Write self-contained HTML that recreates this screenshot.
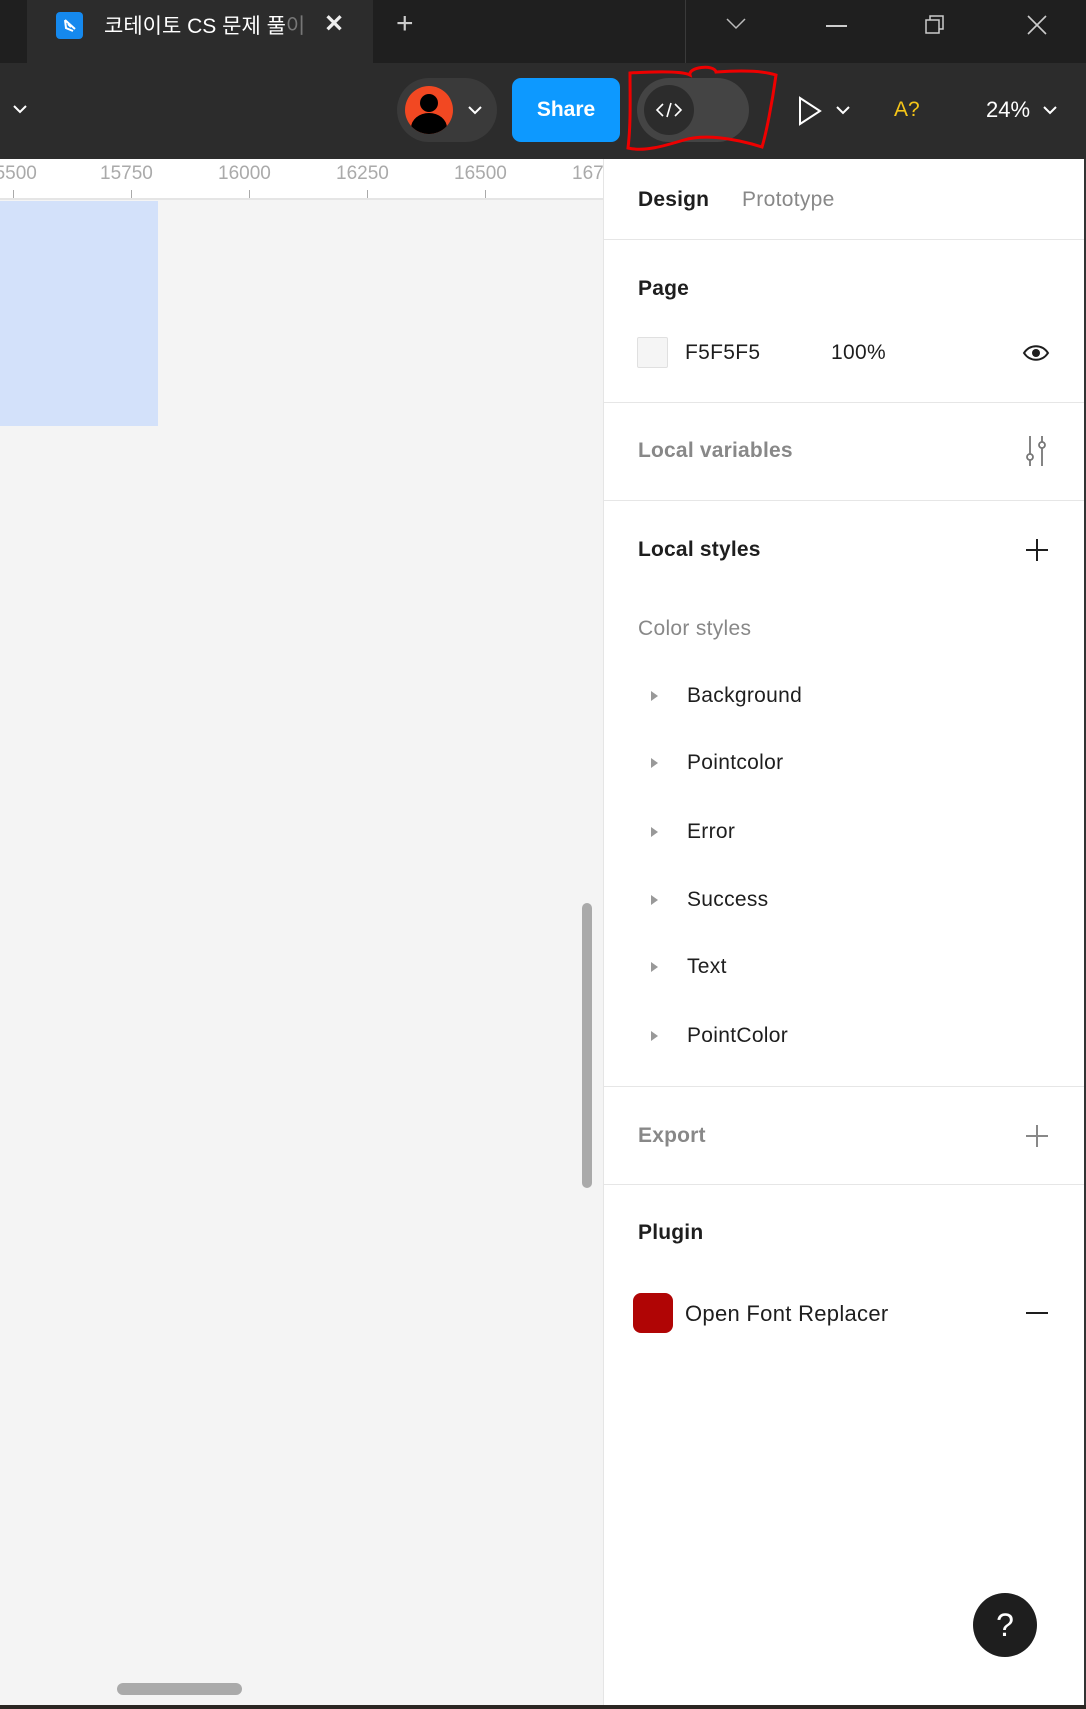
<!DOCTYPE html>
<html><head><meta charset="utf-8"><style>
*{margin:0;padding:0;box-sizing:border-box}
body{width:1086px;height:1709px;position:relative;overflow:hidden;background:#f4f4f4;font-family:"Liberation Sans","Noto Sans CJK KR",sans-serif}
.a{position:absolute}
.t{position:absolute;white-space:nowrap;transform:translateY(-50%)}
.hr{position:absolute;left:604px;width:480px;height:1px;background:#e6e6e6}
.item{font-size:21px;color:#1e1e1e;letter-spacing:0.3px}
.h{font-size:21px;font-weight:bold;letter-spacing:0.2px}
.tri{position:absolute;width:0;height:0;border-left:7px solid #999;border-top:5px solid transparent;border-bottom:5px solid transparent}
</style></head><body>
<!-- tab bar -->
<div class="a" style="left:0;top:0;width:1086px;height:63px;background:#1f1f1f"></div>
<div class="a" style="left:27px;top:0;width:346px;height:63px;background:#2c2c2c"></div>
<div class="a" style="left:56px;top:12px;width:27px;height:27px;background:#1589ee;border-radius:4px"></div>
<svg class="a" style="left:56px;top:12px" width="27" height="27"><path d="M9 8 L19 17 M9 8 L10 16 L17 19 M12 12 l3 3" stroke="#fff" stroke-width="2" fill="none"/></svg>
<div class="t" style="left:104px;top:25px;font-size:21px;color:#fff">코테이토 CS 문제 풀<span style="color:#777">이</span></div>
<div class="t" style="left:324px;top:24px;font-size:24px;color:#eee;font-weight:bold">✕</div>
<div class="t" style="left:396px;top:24px;font-size:30px;color:#ccc">+</div>
<div class="a" style="left:685px;top:0;width:1px;height:63px;background:#3a3a3a"></div>
<svg class="a" style="left:725px;top:15px" width="22" height="16"><path d="M2 4 L11 13 L20 4" stroke="#bbb" stroke-width="1.5" fill="none"/></svg>
<div class="a" style="left:826px;top:25px;width:21px;height:2px;background:#ccc"></div>
<svg class="a" style="left:924px;top:14px" width="22" height="22"><rect x="2" y="6" width="13" height="13" stroke="#ccc" stroke-width="1.5" fill="none"/><path d="M6 6 V2 H19 V15 H15" stroke="#ccc" stroke-width="1.5" fill="none"/></svg>
<svg class="a" style="left:1026px;top:14px" width="22" height="22"><path d="M2 2 L20 20 M20 2 L2 20" stroke="#ccc" stroke-width="1.6"/></svg>
<!-- toolbar -->
<div class="a" style="left:0;top:63px;width:1086px;height:96px;background:#2c2c2c"></div>
<svg class="a" style="left:12px;top:103px" width="16" height="12"><path d="M2 3 L8 9 L14 3" stroke="#fff" stroke-width="2" fill="none"/></svg>
<div class="a" style="left:397px;top:78px;width:100px;height:64px;border-radius:32px;background:#3a3a3a"></div>
<div class="a" style="left:405px;top:86px;width:48px;height:48px;border-radius:50%;background:#f24822;overflow:hidden">
<div class="a" style="left:15px;top:8px;width:18px;height:18px;border-radius:50%;background:#000"></div>
<div class="a" style="left:6px;top:27px;width:36px;height:30px;border-radius:50%;background:#000"></div></div>
<svg class="a" style="left:467px;top:104px" width="16" height="12"><path d="M2 3 L8 9 L14 3" stroke="#fff" stroke-width="2" fill="none"/></svg>
<div class="a" style="left:512px;top:78px;width:108px;height:64px;border-radius:9px;background:#0d99ff;color:#fff;font-size:21px;font-weight:bold;text-align:center;line-height:64px">Share</div>
<div class="a" style="left:637px;top:78px;width:112px;height:64px;border-radius:32px;background:#444"></div>
<div class="a" style="left:644px;top:85px;width:50px;height:50px;border-radius:50%;background:#2c2c2c"></div>
<svg class="a" style="left:654px;top:100px" width="30" height="20"><path d="M9 4 L3 10 L9 16 M21 4 L27 10 L21 16 M17 3 L13 17" stroke="#fff" stroke-width="1.6" fill="none"/></svg>
<svg class="a" style="left:624px;top:64px" width="160" height="90"><path d="M6 9 C40 7 60 8 66 11 C64 3 90 0 92 8 C120 6 140 7 152 11 C148 40 142 70 138 83 C110 74 80 70 60 76 C40 82 20 88 4 84 C7 60 6 30 6 9 Z" stroke="#e00" stroke-width="3" fill="none"/></svg>
<svg class="a" style="left:797px;top:96px" width="26" height="30"><path d="M3 2 L23 15 L3 28 Z" stroke="#fff" stroke-width="2" fill="none"/></svg>
<svg class="a" style="left:835px;top:104px" width="16" height="12"><path d="M2 3 L8 9 L14 3" stroke="#fff" stroke-width="2" fill="none"/></svg>
<div class="t" style="left:894px;top:110px;font-size:21px;color:#f5c518">A?</div>
<div class="t" style="left:986px;top:110px;font-size:22px;color:#fff">24%</div>
<svg class="a" style="left:1042px;top:104px" width="16" height="12"><path d="M2 3 L8 9 L14 3" stroke="#fff" stroke-width="2" fill="none"/></svg>
<!-- ruler -->
<div class="a" style="left:0;top:159px;width:604px;height:41px;background:#fff;border-bottom:2px solid #e5e5e5"></div>
<div class="t" style="left:-16px;top:174px;font-size:19px;color:#aaa">15500</div>
<div class="t" style="left:100px;top:174px;font-size:19px;color:#aaa">15750</div>
<div class="t" style="left:218px;top:174px;font-size:19px;color:#aaa">16000</div>
<div class="t" style="left:336px;top:174px;font-size:19px;color:#aaa">16250</div>
<div class="t" style="left:454px;top:174px;font-size:19px;color:#aaa">16500</div>
<div class="t" style="left:572px;top:174px;font-size:19px;color:#aaa">16750</div>
<div class="a" style="left:13px;top:190px;width:1px;height:8px;background:#aaa"></div>
<div class="a" style="left:131px;top:190px;width:1px;height:8px;background:#aaa"></div>
<div class="a" style="left:249px;top:190px;width:1px;height:8px;background:#aaa"></div>
<div class="a" style="left:367px;top:190px;width:1px;height:8px;background:#aaa"></div>
<div class="a" style="left:485px;top:190px;width:1px;height:8px;background:#aaa"></div>
<div class="a" style="left:0;top:201px;width:158px;height:225px;background:#d3e1fa"></div>
<div class="a" style="left:582px;top:903px;width:10px;height:285px;border-radius:5px;background:#aaa"></div>
<div class="a" style="left:117px;top:1683px;width:125px;height:12px;border-radius:6px;background:#aaa"></div>
<div class="a" style="left:0;top:1705px;width:1086px;height:4px;background:#2b2622"></div>
<!-- panel -->
<div class="a" style="left:603px;top:159px;width:483px;height:1546px;background:#fff;border-left:1px solid #e5e5e5;border-right:2px solid #333"></div>
<div class="t h" style="left:638px;top:200px;color:#1e1e1e">Design</div>
<div class="t item" style="left:742px;top:200px;color:#888">Prototype</div>
<div class="hr" style="top:239px"></div>
<div class="t h" style="left:638px;top:289px;color:#1e1e1e">Page</div>
<div class="a" style="left:637px;top:337px;width:31px;height:31px;background:#f5f5f5;border:1px solid #e0e0e0;border-radius:2px"></div>
<div class="t item" style="left:685px;top:353px">F5F5F5</div>
<div class="t item" style="left:831px;top:353px">100%</div>
<svg class="a" style="left:1022px;top:342px" width="28" height="22"><path d="M2 11 C8 2 20 2 26 11 C20 20 8 20 2 11 Z" stroke="#1e1e1e" stroke-width="2" fill="none"/><circle cx="14" cy="11" r="4" fill="#1e1e1e"/></svg>
<div class="hr" style="top:402px"></div>
<div class="t h" style="left:638px;top:451px;color:#888">Local variables</div>
<svg class="a" style="left:1022px;top:434px" width="28" height="34"><path d="M8 2 V20 M8 26 V32 M20 2 V8 M20 14 V32" stroke="#777" stroke-width="1.8"/><circle cx="8" cy="23" r="3" stroke="#777" stroke-width="1.8" fill="none"/><circle cx="20" cy="11" r="3" stroke="#777" stroke-width="1.8" fill="none"/></svg>
<div class="hr" style="top:500px"></div>
<div class="t h" style="left:638px;top:550px;color:#1e1e1e">Local styles</div>
<svg class="a" style="left:1025px;top:538px" width="24" height="24"><path d="M12 1 V23 M1 12 H23" stroke="#1e1e1e" stroke-width="2"/></svg>
<div class="t item" style="left:638px;top:629px;color:#888">Color styles</div>
<div class="tri" style="left:651px;top:691px"></div><div class="t item" style="left:687px;top:696px">Background</div>
<div class="tri" style="left:651px;top:758px"></div><div class="t item" style="left:687px;top:763px">Pointcolor</div>
<div class="tri" style="left:651px;top:827px"></div><div class="t item" style="left:687px;top:832px">Error</div>
<div class="tri" style="left:651px;top:895px"></div><div class="t item" style="left:687px;top:900px">Success</div>
<div class="tri" style="left:651px;top:962px"></div><div class="t item" style="left:687px;top:967px">Text</div>
<div class="tri" style="left:651px;top:1031px"></div><div class="t item" style="left:687px;top:1036px">PointColor</div>
<div class="hr" style="top:1086px"></div>
<div class="t h" style="left:638px;top:1136px;color:#888">Export</div>
<svg class="a" style="left:1025px;top:1124px" width="24" height="24"><path d="M12 1 V23 M1 12 H23" stroke="#888" stroke-width="2"/></svg>
<div class="hr" style="top:1184px"></div>
<div class="t h" style="left:638px;top:1233px;color:#1e1e1e">Plugin</div>
<div class="a" style="left:633px;top:1293px;width:40px;height:40px;border-radius:8px;background:#b00505"></div>
<div class="t item" style="left:685px;top:1314px;font-size:22px">Open Font Replacer</div>
<div class="a" style="left:1026px;top:1312px;width:22px;height:2px;background:#1e1e1e"></div>
<div class="a" style="left:973px;top:1593px;width:64px;height:64px;border-radius:50%;background:#1e1e1e;color:#fff;font-size:32px;text-align:center;line-height:64px">?</div>
</body></html>
